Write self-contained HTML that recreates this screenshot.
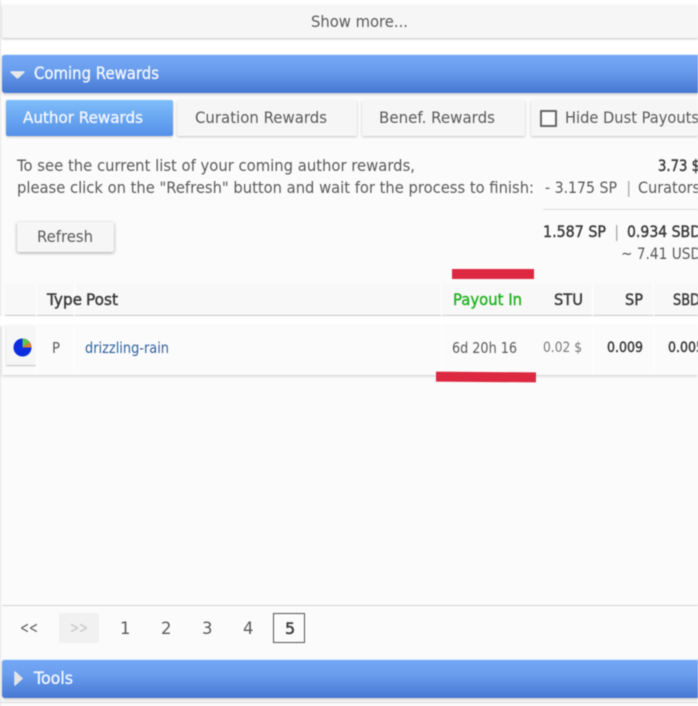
<!DOCTYPE html>
<html><head><meta charset="utf-8">
<style>
html,body{margin:0;padding:0;background:#fbfbfb}
#p{position:relative;width:698px;height:706px;overflow:hidden;background:#fbfbfb;filter:blur(.4px)}
#p div{position:absolute}
.bar{left:2px;width:696px;background:linear-gradient(#74a8f6,#6b9fee 35%,#4678d3);border-radius:3px 0 0 3px;border-top:1px solid #dff0fb;box-sizing:border-box;box-shadow:0 2px 2px rgba(0,0,0,.15)}
.tab{top:100px;height:36px;background:#f6f6f6;border-radius:2px;box-shadow:0 1px 2px rgba(0,0,0,.22)}
svg{position:absolute;left:0;top:0}
text{font-family:"DejaVu Sans","Liberation Sans",sans-serif;font-size:16px;fill:#5a5a5a}
.b{fill:#3a3a3a;stroke:#3a3a3a;stroke-width:.45px}
.w{fill:#f1f6ff;stroke:#f1f6ff;stroke-width:.35px}
</style></head><body>
<div id="p">
<div style="left:0;top:0;width:698px;height:5px;background:#fff"></div>
<div style="left:0;top:38px;width:698px;height:17px;background:#fff"></div>
<div style="left:2px;top:5px;width:696px;height:33px;background:#f6f6f6;box-shadow:0 1px 2px rgba(0,0,0,.25)"></div>
<div style="left:0;top:0;width:1px;height:706px;background:#e4e4e4"></div>
<div class="bar" style="top:54px;height:39px"></div>
<div class="tab" style="left:6px;width:167px;background:linear-gradient(#7fbdfa,#5590e8)"></div>
<div class="tab" style="left:177px;width:180px"></div>
<div class="tab" style="left:362px;width:163px"></div>
<div class="tab" style="left:531px;width:167px"></div>
<div style="left:540px;top:110px;width:13px;height:13px;border:2px solid #666;border-radius:1px;background:#fbfbfb"></div>
<div style="left:543px;top:209px;width:155px;height:1px;background:#dcdcdc"></div>
<div style="left:17px;top:222px;width:97px;height:30px;background:#f6f6f6;border-radius:2px;box-shadow:0 1px 3px rgba(0,0,0,.35)"></div>
<div style="left:5px;top:284px;width:693px;height:31px;background:#f8f8f8;border-bottom:1px solid #c9c9c9;box-sizing:content-box"></div>
<div style="left:0;top:316px;width:698px;height:10px;background:#fff"></div>
<div style="left:2px;top:326px;width:696px;height:49px;background:#fbfbfb;box-shadow:0 1px 3px rgba(0,0,0,.2)"></div>
<div style="left:6px;top:326px;width:30px;height:39px;background:#f6f6f6;box-shadow:0 1px 1px rgba(0,0,0,.25)"></div>
<div style="left:36px;top:284px;width:1px;height:90px;background:#fff"></div>
<div style="left:74px;top:284px;width:1px;height:90px;background:#fff"></div>
<div style="left:441px;top:284px;width:1px;height:90px;background:#fff"></div>
<div style="left:592px;top:284px;width:1px;height:90px;background:#fff"></div>
<div style="left:653px;top:284px;width:1px;height:90px;background:#fff"></div>
<div style="left:452px;top:269px;width:82px;height:10px;background:#dc2840"></div>
<div style="left:436px;top:372px;width:100px;height:10px;background:#dc2840;transform:rotate(.5deg)"></div>
<div style="left:2px;top:605px;width:696px;height:1px;background:#d4d4d4"></div>
<div style="left:59px;top:613px;width:40px;height:30px;background:#f1f1f1"></div>
<div style="left:273px;top:613px;width:30px;height:28px;border:1px solid #555;background:#fbfbfb"></div>
<div class="bar" style="top:659px;height:39px"></div>
<div style="left:0;top:702px;width:698px;height:1px;background:#d8d8d8"></div>
<svg width="698" height="706" viewBox="0 0 698 706">
<text x="311" y="27" textLength="97" lengthAdjust="spacingAndGlyphs">Show more...</text>
<path d="M11 72h13l-6.500 6z" fill="#e9e9e9" stroke="#e9e9e9" stroke-width="1.500" stroke-linejoin="round"/>
<text x="34" y="79" class="w" textLength="125" lengthAdjust="spacingAndGlyphs" style="font-size:16.500px">Coming Rewards</text>
<text x="23" y="123" class="w" textLength="120" lengthAdjust="spacingAndGlyphs">Author Rewards</text>
<text x="195" y="123" textLength="132" lengthAdjust="spacingAndGlyphs">Curation Rewards</text>
<text x="379" y="123" textLength="116" lengthAdjust="spacingAndGlyphs">Benef. Rewards</text>
<text x="565" y="123" textLength="134" lengthAdjust="spacingAndGlyphs">Hide Dust Payouts</text>
<text x="17" y="171" textLength="398" lengthAdjust="spacingAndGlyphs">To see the current list of your coming author rewards,</text>
<text x="17" y="193" textLength="517" lengthAdjust="spacingAndGlyphs">please click on the "Refresh" button and wait for the process to finish:</text>
<text x="658" y="171" class="b" textLength="42" lengthAdjust="spacingAndGlyphs">3.73 $</text>
<text x="545" y="193" textLength="72" lengthAdjust="spacingAndGlyphs">- 3.175 SP</text>
<text x="626" y="193" style="fill:#aaa">|</text>
<text x="638" y="193" textLength="62" lengthAdjust="spacingAndGlyphs">Curators</text>
<text x="37" y="242" textLength="56" lengthAdjust="spacingAndGlyphs">Refresh</text>
<text x="543" y="237" class="b" textLength="63" lengthAdjust="spacingAndGlyphs">1.587 SP</text>
<text x="614" y="237" style="fill:#aaa">|</text>
<text x="627" y="237" class="b" textLength="74" lengthAdjust="spacingAndGlyphs">0.934 SBD</text>
<text x="621" y="259" textLength="80" lengthAdjust="spacingAndGlyphs">~ 7.41 USD</text>
<text x="47" y="305" class="b" textLength="35" lengthAdjust="spacingAndGlyphs">Type</text>
<text x="86" y="305" class="b" textLength="32" lengthAdjust="spacingAndGlyphs">Post</text>
<text x="453" y="305" textLength="69" lengthAdjust="spacingAndGlyphs" style="fill:#1fb31f;stroke:#1fb31f;stroke-width:.4px">Payout In</text>
<text x="554" y="305" class="b" textLength="29" lengthAdjust="spacingAndGlyphs">STU</text>
<text x="625" y="305" class="b" textLength="18" lengthAdjust="spacingAndGlyphs">SP</text>
<text x="673" y="305" class="b" textLength="27" lengthAdjust="spacingAndGlyphs">SBD</text>
<circle cx="22.500" cy="347.500" r="9" fill="#0a2ee0"/>
<path d="M22.500 347.500V338.500A9 9 0 0 1 29.500 342z" fill="#5cc84a"/>
<path d="M22.500 347.500L29.500 342A9 9 0 0 1 31.500 347.500z" fill="#e0802a"/>
<text x="52" y="353" style="font-size:15px" textLength="8" lengthAdjust="spacingAndGlyphs">P</text>
<text x="85" y="353" textLength="84" lengthAdjust="spacingAndGlyphs" style="fill:#2f62a0;font-size:15.500px">drizzling-rain</text>
<text x="452" y="353" style="font-size:15px" textLength="65" lengthAdjust="spacingAndGlyphs">6d 20h 16</text>
<text x="543" y="352" style="font-size:14.500px;fill:#777" textLength="39" lengthAdjust="spacingAndGlyphs">0.02 $</text>
<text x="607" y="352" class="b" style="font-size:14.500px" textLength="36" lengthAdjust="spacingAndGlyphs">0.009</text>
<text x="668" y="352" class="b" style="font-size:14.500px" textLength="36" lengthAdjust="spacingAndGlyphs">0.005</text>
<text x="20" y="633" textLength="18" lengthAdjust="spacingAndGlyphs">&lt;&lt;</text>
<text x="70" y="633" textLength="18" lengthAdjust="spacingAndGlyphs" style="fill:#c4c4c4">&gt;&gt;</text>
<text x="120" y="634" style="font-size:16.500px">1</text>
<text x="161" y="634" style="font-size:16.500px">2</text>
<text x="202" y="634" style="font-size:16.500px">3</text>
<text x="243" y="634" style="font-size:16.500px">4</text>
<text x="285" y="634" class="b" style="font-size:16px">5</text>
<path d="M15 672l7 6.500-7 6.500z" fill="#e4e4e4" stroke="#e4e4e4" stroke-width="1.500" stroke-linejoin="round"/>
<text x="34" y="684" class="w" textLength="39" lengthAdjust="spacingAndGlyphs" style="font-size:16.500px">Tools</text>
</svg>
</div>
</body></html>
